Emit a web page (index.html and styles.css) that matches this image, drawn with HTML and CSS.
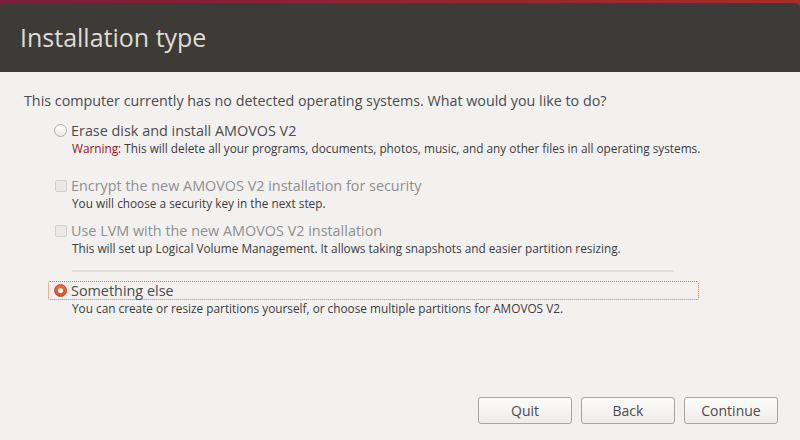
FILE: index.html
```html
<!DOCTYPE html>
<html>
<head>
<meta charset="utf-8">
<link rel="stylesheet" href="styles.css">
</head>
<body>
<div class="frame">
  <header class="titlebar"><h1 class="title">Installation type</h1></header>
</div>
<main class="content">
  <p class="question">This computer currently has no detected operating systems. What would you like to do?</p>
  <div class="options">
    <div class="option">
      <div class="row"><span class="radio"></span><span class="label">Erase disk and install AMOVOS V2</span></div>
      <div class="desc"><span class="warn">Warning:</span> This will delete all your programs, documents, photos, music, and any other files in all operating systems.</div>
    </div>
    <div class="option sub first-sub">
      <div class="row disabled"><span class="check"></span><span class="label">Encrypt the new AMOVOS V2 installation for security</span></div>
      <div class="desc">You will choose a security key in the next step.</div>
    </div>
    <div class="option sub">
      <div class="row disabled"><span class="check"></span><span class="label">Use LVM with the new AMOVOS V2 installation</span></div>
      <div class="desc">This will set up Logical Volume Management. It allows taking snapshots and easier partition resizing.</div>
    </div>
    <div class="sep"></div>
    <div class="option">
      <div class="row focused"><span class="radio checked"></span><span class="label">Something else</span></div>
      <div class="desc">You can create or resize partitions yourself, or choose multiple partitions for AMOVOS V2.</div>
    </div>
  </div>
</main>
<footer class="buttons">
  <button class="btn">Quit</button>
  <button class="btn">Back</button>
  <button class="btn">Continue</button>
</footer>
</body>
</html>
```
FILE: styles.css
```css
* { box-sizing: border-box; }
html, body { margin: 0; padding: 0; }
body {
  width: 800px;
  height: 440px;
  background: #f2f1f0;
  font-family: "Open Sans", "DejaVu Sans", sans-serif;
  color: #4c4c4c;
  display: flex;
  flex-direction: column;
  overflow: hidden;
}
.frame {
  background: linear-gradient(to right, #7c1b3c, #952232 50%, #a52e2a);
  padding-top: 3px;
}
.titlebar {
  background: #3c3b37;
  height: 69px;
  border-radius: 5px 5px 0 0;
  display: flex;
  align-items: center;
  padding-left: 20px;
}
.title {
  margin: 0;
  font-weight: 400;
  font-size: 25px;
  color: #dfdbd2;
  padding-bottom: 1px;
}
.content {
  flex: 1;
  padding: 19px 24px 0 24px;
}
.question {
  margin: 0;
  font-size: 14.3px;
  line-height: 20px;
}
.options {
  margin-top: 10px;
  margin-left: 24px;
}
.option.first-sub { margin-top: 20px; }
.option.sub + .option.sub { margin-top: 10px; }
.row {
  width: 651px;
  height: 19px;
  display: flex;
  align-items: center;
  padding-left: 5px;
  border: 1px dotted transparent;
  font-size: 14.4px;
}
.row.focused { border-color: #ef6c3c; border-radius: 2px; }
.row.disabled .label { color: #8f8f8f; }
.label { white-space: nowrap; }
.radio {
  width: 13px; height: 13px;
  border-radius: 50%;
  border: 1px solid #b5afa9;
  background: linear-gradient(#ffffff, #ebe9e7);
  margin-right: 4px;
  flex: none;
  position: relative;
}
.radio.checked {
  border-color: #c44a1f;
  background: linear-gradient(#ee6b3c, #dc5020);
}
.radio.checked::after {
  content: "";
  position: absolute;
  width: 5px; height: 5px;
  border-radius: 50%;
  background: #fff;
  left: 3px; top: 3px;
}
.check {
  width: 12px; height: 12px;
  border-radius: 2px;
  border: 1px solid #d3cfcb;
  background: #ebe9e7;
  margin-left: 1px;
  margin-right: 4px;
  flex: none;
}
.desc {
  padding-left: 24px;
  padding-top: 1px;
  font-size: 11.8px;
  line-height: 15px;
  color: #3c3c3c;
  white-space: nowrap;
}
.warn { color: #a01010; }
.sep {
  height: 2px;
  background: #e0dedc;
  width: 602px;
  margin: 14px 0 9px 24px;
}
.buttons {
  display: flex;
  justify-content: flex-end;
  gap: 9px;
  padding: 0 22px 16px 0;
}
.btn {
  width: 94px;
  height: 27px;
  border: 1px solid #aaa5a0;
  border-radius: 3px;
  background: linear-gradient(#fcfcfb, #eeecea);
  font-family: inherit;
  font-size: 14px;
  color: #4c4c4c;
  padding: 0;
}
```
